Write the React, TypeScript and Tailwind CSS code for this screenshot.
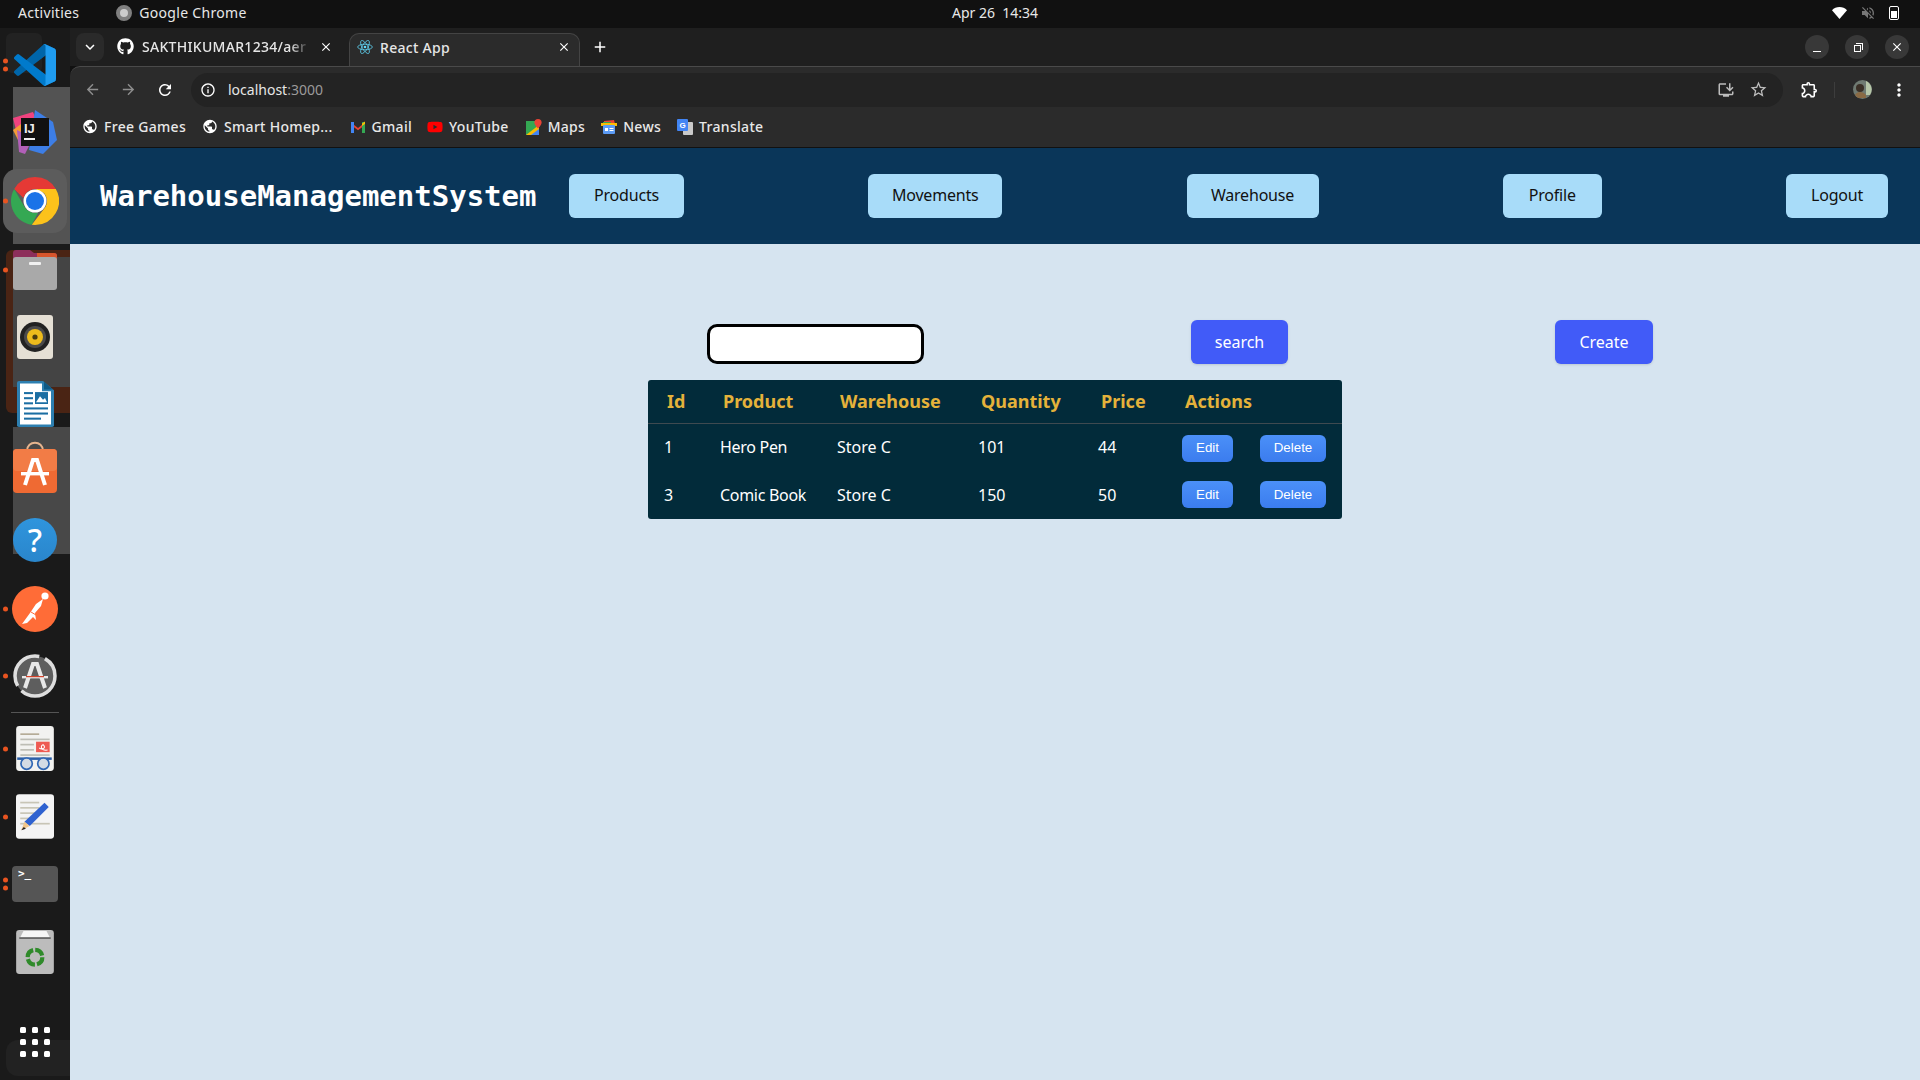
import {
  MdArrowBack,
  MdArrowForward,
  MdRefresh,
  MdInfoOutline,
  MdInstallDesktop,
  MdStarBorder,
  MdOutlineExtension,
  MdMoreVert,
  MdPublic,
  MdClose,
  MdAdd,
  MdKeyboardArrowDown,
  MdVolumeOff,
} from "react-icons/md";
import { FaGithub, FaYoutube } from "react-icons/fa";
import type { ReactNode } from "react";

const ChromeLogo = ({ size = 48 }: { size?: number }) => (
  <svg width={size} height={size} viewBox="0 0 48 48">
    <path fill="#e53935" d="M24 0a24 24 0 0 1 20.8 12H24a12 12 0 0 0-11.6 9L3.2 12A24 24 0 0 1 24 0Z" />
    <path fill="#34a853" d="M3.2 12l10.4 18a12 12 0 0 0 13.5 5.6L20.8 47.8A24 24 0 0 1 3.2 12Z" />
    <path fill="#fcc21b" d="M44.8 12A24 24 0 0 1 24 48l-3.2-.2L34.4 30A12 12 0 0 0 33 16l-9-4Z" />
    <circle cx="24" cy="24" r="11.5" fill="#fff" />
    <circle cx="24" cy="24" r="9" fill="#1a73e8" />
  </svg>
);

const VsCodeLogo = () => (
  <svg width="42" height="42" viewBox="0 0 100 100">
    <path fill="#0065a9" d="M96.5 10.8 75.9.9a6.2 6.2 0 0 0-7.1 1.2L1.4 63.6a4.2 4.2 0 0 0 0 6.2l5.5 5a4.2 4.2 0 0 0 5.3.2L93.3 13.5c2.7-2 6.7-.1 6.7 3.3v-.2a6.2 6.2 0 0 0-3.5-5.8Z" />
    <path fill="#007acc" d="m96.5 89.2-20.6 9.9a6.2 6.2 0 0 1-7.1-1.2L1.4 36.4a4.2 4.2 0 0 1 0-6.2l5.5-5a4.2 4.2 0 0 1 5.3-.2l81.1 61.5c2.7 2 6.7.1 6.7-3.3v.2a6.2 6.2 0 0 1-3.5 5.8Z" />
    <path fill="#1f9cf0" d="M75.9 99.1a6.2 6.2 0 0 1-7.1-1.2c2.3 2.3 6.2.7 6.2-2.6V4.7c0-3.3-3.9-4.9-6.2-2.6A6.2 6.2 0 0 1 75.9.9l20.6 9.9a6.2 6.2 0 0 1 3.5 5.6v67.2a6.2 6.2 0 0 1-3.5 5.6l-20.6 9.9Z" />
  </svg>
);

const IntellijLogo = () => (
  <svg width="44" height="44" viewBox="0 0 44 44">
    <path fill="#f0437f" d="M0 8 20 2l6 14-22 8Z" />
    <path fill="#f59b37" d="M0 20l8-6 6 16-8 2Z" />
    <path fill="#b25fb8" d="M4 20l16 8-8 16-6-2Z" />
    <path fill="#3d7ee6" d="M22 0l18 12 4 18-14 14-14-4Z" />
    <rect x="8" y="8" width="28" height="28" fill="#111" />
    <rect x="11" y="28" width="11" height="2" fill="#eee" />
    <text x="11" y="23" fill="#eee" fontSize="13" fontWeight="700" fontFamily="'Liberation Sans', sans-serif">IJ</text>
  </svg>
);

const FilesIcon = () => (
  <svg width="44" height="40" viewBox="0 0 44 40">
    <path fill="#8d2f5b" d="M0 3a3 3 0 0 1 3-3h14l4 3h20a3 3 0 0 1 3 3v8H0Z" />
    <path fill="#d8552b" d="M24 3h17a3 3 0 0 1 3 3v8H24Z" />
    <rect y="7" width="44" height="33" rx="3" fill="#a9a9a9" />
    <rect x="16" y="12" width="12" height="3" rx="1" fill="#f1f1f1" />
  </svg>
);

const RhythmboxIcon = () => (
  <svg width="36" height="44" viewBox="0 0 36 44">
    <rect width="36" height="44" rx="3" fill="#e5e0d5" />
    <circle cx="18" cy="22" r="15" fill="#222" />
    <circle cx="18" cy="22" r="11" fill="#4b4b4b" />
    <circle cx="18" cy="22" r="8" fill="#edbb1c" />
    <circle cx="18" cy="22" r="2.6" fill="#4a3b10" />
  </svg>
);

const WriterIcon = () => (
  <svg width="37" height="46" viewBox="0 0 37 54" preserveAspectRatio="none">
    <path fill="#2d7fb0" d="M2 0h24l11 11v41a2 2 0 0 1-2 2H2a2 2 0 0 1-2-2V2a2 2 0 0 1 2-2Z" />
    <path fill="#fff" d="M3 3h22v9h9v39H3Z" />
    <path fill="#0e5a86" d="M27 1l9 9h-9Z" />
    <rect x="7" y="13" width="9" height="2.4" fill="#1b6ea3" />
    <rect x="7" y="19" width="9" height="2.4" fill="#1b6ea3" />
    <rect x="7" y="25" width="9" height="2.4" fill="#1b6ea3" />
    <rect x="18" y="13" width="13" height="14" fill="#1b6ea3" />
    <path fill="#fff" d="M19 25l4-7 3 4 2-2 2 5Z" />
    <rect x="7" y="31" width="24" height="2.4" fill="#1b6ea3" />
    <rect x="7" y="37" width="24" height="2.4" fill="#1b6ea3" />
    <rect x="7" y="43" width="17" height="2.4" fill="#1b6ea3" />
  </svg>
);

const StoreIcon = () => (
  <svg width="44" height="52" viewBox="0 0 44 52">
    <path fill="none" stroke="#e6b48e" strokeWidth="2" d="M14 10c0-11 16-11 16 0" />
    <rect y="8" width="44" height="44" rx="4" fill="#ef6a33" />
    <rect y="8" width="44" height="22" rx="4" fill="#f27c46" />
    <path fill="none" stroke="#fff" strokeWidth="4" d="M12 44l8-25h4l8 25" />
    <rect x="8" y="31" width="28" height="3.4" fill="#fff" />
  </svg>
);

const HelpIcon = () => (
  <div className="w-11 h-11 rounded-full bg-linear-to-b from-[#2f95dd] to-[#2a86cc] flex items-center justify-center text-white text-[32px] font-medium leading-none">
    ?
  </div>
);

const PostmanIcon = () => (
  <svg width="46" height="46" viewBox="0 0 46 46">
    <circle cx="23" cy="23" r="23" fill="#ff6c37" />
    <circle cx="33" cy="10" r="3.6" fill="#fff" />
    <path fill="#fff" d="M31 13l-7 5-6 9-8 11 5-1 6-6 3 3-1-7 6-7Z" />
    <path fill="none" stroke="#ff6c37" strokeWidth="1" d="M19 26l5 3" />
  </svg>
);

const UpdaterIcon = () => (
  <svg width="44" height="44" viewBox="0 0 44 44">
    <circle cx="22" cy="22" r="20" fill="#5e5e5e" stroke="#dedede" strokeWidth="3.5" strokeDasharray="46 6" />
    <path fill="none" stroke="#e8e8e8" strokeWidth="4" d="M12 34l8-24h4l8 24" />
    <rect x="9" y="22" width="26" height="2.4" fill="#e8e8e8" />
    <rect x="13" y="22" width="18" height="1.2" fill="#d6432b" />
  </svg>
);

const ReaderIcon = () => (
  <svg width="38" height="45" viewBox="0 0 36 43">
    <rect width="36" height="43" rx="3" fill="#f2f2f0" />
    <rect x="4" y="7" width="18" height="1.6" fill="#b5ac97" />
    <rect x="4" y="12" width="28" height="1.6" fill="#bdbdb5" />
    <rect x="4" y="17" width="13" height="1.6" fill="#bdbdb5" />
    <rect x="4" y="22" width="13" height="1.6" fill="#bdbdb5" />
    <rect x="4" y="27" width="28" height="1.6" fill="#bdbdb5" />
    <rect x="19" y="15" width="13" height="10" fill="#ee5a52" />
    <path fill="none" stroke="#fff" strokeWidth="1" d="M22 21c3 2 7 0 4-3-3 0-3 6 4 5" />
    <rect x="1" y="30" width="33" height="2.4" fill="#2b5fa8" />
    <circle cx="10" cy="36" r="5.4" fill="#d4dbe4" stroke="#2f66b4" strokeWidth="1.6" />
    <circle cx="26" cy="36" r="5.4" fill="#d4dbe4" stroke="#2f66b4" strokeWidth="1.6" />
  </svg>
);

const EditorIcon = () => (
  <svg width="38" height="45" viewBox="0 0 36 42">
    <rect width="36" height="42" rx="3" fill="#f4f4f4" />
    <rect x="4" y="7" width="18" height="1.6" fill="#c8c5b6" />
    <rect x="4" y="12" width="18" height="1.6" fill="#c8c5b6" />
    <rect x="4" y="17" width="14" height="1.6" fill="#c8c5b6" />
    <rect x="4" y="22" width="10" height="1.6" fill="#c8c5b6" />
    <rect x="4" y="27" width="28" height="1.6" fill="#c8c5b6" />
    <path fill="#2f62d0" d="M27 8l4 4-18 18-5-4Z" />
    <path fill="#f0c58a" d="M8 26l5 4-8 4Z" />
    <path fill="#222" d="M5 34l2.4-3 2 1.6Z" />
  </svg>
);

const TerminalIcon = () => (
  <div className="w-[46px] h-9 rounded-[4px] bg-[#555] px-[6px] text-white text-[11px] leading-[16px] font-bold" style={{ fontFamily: "'DejaVu Sans Mono', monospace" }}>
    {">_"}
  </div>
);

const TrashIcon = () => (
  <svg width="38" height="44" viewBox="0 0 36 42">
    <rect width="36" height="42" rx="3" fill="#bcbcbc" />
    <path fill="#f5f5f5" d="M4 7l3-6h22l3 6Z" />
    <rect x="3" y="7" width="30" height="1.4" fill="#555" />
    <circle cx="18" cy="26" r="7" fill="none" stroke="#2f8a2a" strokeWidth="4" strokeDasharray="9 2" />
  </svg>
);

const GmailIcon = () => (
  <svg width="14" height="12" viewBox="0 0 14 12">
    <path fill="#ea4335" d="M0 1.5 7 7l7-5.5V4L7 9.2 0 4Z" />
    <rect y="1" width="3" height="11" fill="#4285f4" />
    <rect x="11" y="1" width="3" height="11" fill="#34a853" />
    <path fill="#fbbc04" d="M11 2.6 14 .6V3l-3 2Z" />
  </svg>
);

const MapsIcon = () => (
  <svg width="16" height="16" viewBox="0 0 16 16">
    <rect y="2" width="13" height="14" fill="#34a853" />
    <path fill="#fbbc04" d="M0 16 13 6v10Z" />
    <path fill="#4285f4" d="M5 16l8-6v6Z" />
    <path fill="#ea4335" d="M12 0a3.6 3.6 0 0 1 3.6 3.6c0 2.4-3.6 6-3.6 6s-3.6-3.6-3.6-6A3.6 3.6 0 0 1 12 0Z" />
  </svg>
);

const NewsIcon = () => (
  <svg width="16" height="14" viewBox="0 0 16 14">
    <path fill="#ea4335" d="M3 1l10-1 1 4H3Z" />
    <path fill="#34a853" d="M2 2h8v3H2Z" />
    <path fill="#fbbc04" d="M0 3h16v3H0Z" />
    <rect x="2" y="5" width="12" height="9" rx="1" fill="#5b9bf5" />
    <rect x="4" y="8" width="3" height="3" fill="#fff" />
    <rect x="8.5" y="8" width="4" height="1" fill="#fff" />
    <rect x="8.5" y="10" width="4" height="1" fill="#fff" />
  </svg>
);

const TranslateIcon = () => (
  <svg width="16" height="16" viewBox="0 0 16 16">
    <rect x="6" y="3" width="10" height="13" rx="1" fill="#c9c9c9" />
    <rect width="11" height="12" rx="1" fill="#4285f4" />
    <text x="2.6" y="9" fill="#fff" fontSize="8" fontWeight="700" fontFamily="'Liberation Sans', sans-serif">G</text>
  </svg>
);

const ReactFavicon = () => (
  <svg width="16" height="16" viewBox="-12 -12 24 24" fill="none" stroke="#61dafb" strokeWidth="1.1">
    <circle r="2" fill="#61dafb" stroke="none" />
    <ellipse rx="11" ry="4.2" />
    <ellipse rx="11" ry="4.2" transform="rotate(60)" />
    <ellipse rx="11" ry="4.2" transform="rotate(120)" />
  </svg>
);

const WifiFan = () => (
  <svg width="15" height="12" viewBox="0 0 15 12">
    <path fill="#fff" d="M7.5 12 0 3.2C2 1.2 4.6 0 7.5 0S13 1.2 15 3.2Z" />
  </svg>
);

const Avatar = () => (
  <svg width="19" height="19" viewBox="0 0 19 19">
    <circle cx="9.5" cy="9.5" r="9.5" fill="#6f7a72" />
    <path fill="#b6c6a8" d="M13 1a9.5 9.5 0 0 1 4 14h-4Z" />
    <circle cx="7" cy="8" r="4" fill="#3a2f26" />
    <path fill="#8a6a44" d="M2 15c2-4 8-4 11 0v3H5Z" />
  </svg>
);

const Slot = ({ className, dots = 0, children }: { className: string; dots?: number; children: ReactNode }) => (
  <div className={`relative w-full flex justify-center ${className}`}>
    {dots > 0 && (
      <div className="absolute left-[3px] top-1/2 -translate-y-1/2 flex flex-col gap-[3px]">
        {Array.from({ length: dots }).map((_, i) => (
          <span key={i} className="block w-[5px] h-[5px] rounded-full bg-[#e95420]" />
        ))}
      </div>
    )}
    {children}
  </div>
);

const Dock = () => (
  <aside className="relative w-[70px] shrink-0 bg-[#1a1a1a] overflow-hidden">
    {/* window previews showing through the dock */}
    <div className="absolute left-[6px] top-[5px] w-[36px] h-[40px] rounded-md bg-[#222]" />
    <div className="absolute left-[13px] top-[59px] w-[57px] h-[157px] bg-[#535353]" />
    <div className="absolute left-[6px] top-[222px] w-[64px] h-[163px] rounded-l-md bg-[#4a2414]" />
    <div className="absolute left-[13px] top-[229px] w-[57px] h-[130px] bg-[#444]" />
    <div className="absolute left-[13px] top-[399px] w-[57px] h-[127px] bg-[#484848]" />
    <div className="absolute left-[6px] bottom-[4px] w-[64px] h-[36px] rounded-l-xl bg-[#222]" />
    <div className="absolute left-[3px] top-[141px] w-[64px] h-[64px] rounded-[14px] bg-[#5c5c5c]" />

    <div className="relative flex flex-col items-center">
      <Slot className="mt-[16px] h-[42px]" dots={2}><VsCodeLogo /></Slot>
      <Slot className="mt-[24px] h-[44px]"><IntellijLogo /></Slot>
      <Slot className="mt-[23px] h-[48px]" dots={1}><ChromeLogo /></Slot>
      <Slot className="mt-[25px] h-[40px]" dots={1}><FilesIcon /></Slot>
      <Slot className="mt-[25px] h-[44px]"><RhythmboxIcon /></Slot>
      <Slot className="mt-[22px] h-[46px]"><WriterIcon /></Slot>
      <Slot className="mt-[14px] h-[52px]"><StoreIcon /></Slot>
      <Slot className="mt-[25px] h-[44px]"><HelpIcon /></Slot>
      <Slot className="mt-[24px] h-[46px]" dots={1}><PostmanIcon /></Slot>
      <Slot className="mt-[22px] h-[44px]" dots={1}><UpdaterIcon /></Slot>
      <div className="mt-[14px] w-[48px] h-px bg-[#555]" />
      <Slot className="mt-[13px] h-[45px]" dots={1}><ReaderIcon /></Slot>
      <Slot className="mt-[23px] h-[45px]" dots={1}><EditorIcon /></Slot>
      <Slot className="mt-[27px] h-9" dots={2}><TerminalIcon /></Slot>
      <Slot className="mt-[28px] h-[44px]"><TrashIcon /></Slot>
      <div className="mt-[53px] grid grid-cols-3 gap-[6px]">
        {Array.from({ length: 9 }).map((_, i) => (
          <span key={i} className="block w-[6px] h-[6px] rounded-[1.5px] bg-white" />
        ))}
      </div>
    </div>
  </aside>
);

const TopBar = () => (
  <header className="relative h-[28px] shrink-0 bg-[#111] flex items-center pb-[3px] text-[14px] tracking-[0.3px] text-[#e8e8e8]">
    <span className="ml-[18px]">Activities</span>
    <span className="ml-[37px] flex items-center gap-[7px]">
      <span className="w-4 h-4 rounded-full bg-[#ccc] border-[4px] border-[#808080] block" />
      Google Chrome
    </span>
    <span className="absolute left-[952px] whitespace-pre tracking-normal">Apr 26  14:34</span>
    <div className="ml-auto mr-[21px] flex items-center gap-[13px]">
      <WifiFan />
      <MdVolumeOff className="text-[#777] text-[16px]" />
      <span className="relative block w-[10px] h-[14px] rounded-[2px] border border-white">
        <span className="absolute left-[1px] right-[1px] bottom-[1px] h-[7px] bg-white" />
      </span>
    </div>
  </header>
);

const TabStrip = () => (
  <div className="h-[38px] shrink-0 bg-[#1f1f1f] flex items-end text-[14px] font-medium tracking-[0.3px] text-[#e6e6e6]">
    <button className="ml-[6px] mb-[5px] w-[28px] h-[28px] rounded-lg bg-[#2a2a2a] flex items-center justify-center text-white">
      <MdKeyboardArrowDown className="text-[18px]" />
    </button>
    <div className="w-[245px] h-[33px] pl-[13px] pb-[6px] flex items-center">
      <FaGithub className="text-white text-[17px] shrink-0" />
      <span className="ml-[8px] w-[168px] whitespace-nowrap overflow-hidden [mask-image:linear-gradient(to_right,black_88%,transparent)]">SAKTHIKUMAR1234/aer</span>
      <MdClose className="ml-[9px] text-white text-[14px] shrink-0" />
    </div>
    <div className="w-[231px] h-[33px] pl-[7px] pb-[6px] rounded-t-[10px] bg-[#2b2b2b] border border-b-0 border-[#444] flex items-center">
      <ReactFavicon />
      <span className="ml-[7px]">React App</span>
      <MdClose className="ml-auto mr-[8px] text-white text-[14px]" />
    </div>
    <MdAdd className="ml-[11px] mb-[10px] text-white text-[18px]" />
    <div className="ml-auto mb-[7px] mr-[11px] flex items-center gap-[16px] text-white">
      <span className="w-6 h-6 rounded-full bg-[#383838] flex items-end justify-center pb-[7px]"><span className="block w-[8px] h-px bg-white" /></span>
      <span className="w-6 h-6 rounded-full bg-[#383838] flex items-center justify-center">
        <span className="relative block w-[7px] h-[7px] border border-white translate-y-[1px]">
          <span className="absolute -top-[3px] left-[1px] w-[7px] h-[7px] border-t border-r border-white" />
        </span>
      </span>
      <span className="w-6 h-6 rounded-full bg-[#383838] flex items-center justify-center"><MdClose className="text-[14px]" /></span>
    </div>
  </div>
);

const Toolbar = () => (
  <div className="h-[44px] shrink-0 pt-[2px] bg-[#2b2b2b] border-t border-[#4a4a4a] rounded-tl-[10px] flex items-center text-[#8e8e8e]">
    <MdArrowBack className="ml-[14px] text-[17px]" />
    <MdArrowForward className="ml-[19px] text-[17px]" />
    <MdRefresh className="ml-[19px] text-[18px] text-white" />
    <div className="ml-[17px] w-[1592px] h-[34px] rounded-full bg-[#232323] flex items-center text-[14px]">
      <MdInfoOutline className="ml-[9px] text-[16px] text-white" />
      <span className="ml-[12px] text-[#e6e6e6]">localhost<span className="text-[#9a9a9a]">:3000</span></span>
      <MdInstallDesktop className="ml-auto text-[18px] text-[#bdbdbd]" />
      <MdStarBorder className="ml-[14px] mr-[15px] text-[19px] text-[#bdbdbd]" />
    </div>
    <MdOutlineExtension className="ml-[17px] text-[19px] text-white" />
    <span className="ml-[15px] block w-px h-[16px] bg-[#3d3d3d]" />
    <span className="ml-[18px] block"><Avatar /></span>
    <MdMoreVert className="ml-[17px] text-[20px] text-white" />
  </div>
);

const Bookmark = ({ icon, label, className }: { icon: ReactNode; label: string; className: string }) => (
  <div className={`flex items-center gap-[6px] ${className}`}>
    <span className="w-[16px] flex justify-center">{icon}</span>
    <span>{label}</span>
  </div>
);

const BookmarksBar = () => {
  const globe = <MdPublic className="text-white text-[17px]" />;
  return (
    <div className="h-[38px] shrink-0 pb-[4px] bg-[#2b2b2b] border-b border-[#111] flex items-center text-[14px] font-medium tracking-[0.3px] text-[#e8e8e8]">
      <Bookmark className="ml-[12px]" icon={globe} label="Free Games" />
      <Bookmark className="ml-[16px]" icon={globe} label="Smart Homep..." />
      <Bookmark className="ml-[17px]" icon={<GmailIcon />} label="Gmail" />
      <Bookmark className="ml-[15px]" icon={<FaYoutube className="text-[#f00] text-[16px]" />} label="YouTube" />
      <Bookmark className="ml-[17px]" icon={<MapsIcon />} label="Maps" />
      <Bookmark className="ml-[16px]" icon={<NewsIcon />} label="News" />
      <Bookmark className="ml-[16px]" icon={<TranslateIcon />} label="Translate" />
    </div>
  );
};

const NavButton = ({ label, className }: { label: string; className: string }) => (
  <button className={`h-11 pb-[2px] rounded-md bg-[#a8dcf9] text-[#111] text-[16px] tracking-[-0.2px] ${className}`}>{label}</button>
);

const rows = [
  { id: 1, product: "Hero Pen", warehouse: "Store C", quantity: 101, price: 44, pad: "pt-[11px]" },
  { id: 3, product: "Comic Book", warehouse: "Store C", quantity: 150, price: 50, pad: "pt-[10px]" },
];

const headings = ["Id", "Product", "Warehouse", "Quantity", "Price", "Actions"];

const ProductsPage = () => (
  <main className="flex-1 bg-[#d6e4f0]">
    <nav className="h-24 bg-[#0a3659] flex items-center pl-[30px] pr-[32px]">
      <h1
        className="w-[469px] shrink-0 pt-[2px] text-white text-[29px] font-bold whitespace-nowrap"
        style={{ fontFamily: "'DejaVu Sans Mono', monospace" }}
      >
        WarehouseManagementSystem
      </h1>
      <div className="flex-1 flex items-center justify-between">
        <NavButton label="Products" className="w-[115px]" />
        <NavButton label="Movements" className="w-[134px]" />
        <NavButton label="Warehouse" className="w-[132px]" />
        <NavButton label="Profile" className="w-[99px]" />
        <NavButton label="Logout" className="w-[102px]" />
      </div>
    </nav>

    <div className="pt-[76px]">
      <div className="flex items-end pl-[637px]">
        <input className="w-[217px] h-10 bg-white border-[3px] border-black rounded-[10px]" />
        <button className="ml-[267px] w-[97px] h-11 rounded-md bg-[#415bf8] text-white text-[16px] shadow-sm">search</button>
        <button className="ml-[267px] w-[98px] h-11 rounded-md bg-[#415bf8] text-white text-[16px] shadow-sm">Create</button>
      </div>

      <div className="mt-4 ml-[578px] w-[694px] rounded-[3px] bg-[#022b3a] overflow-hidden">
        <table className="w-full table-fixed text-left">
          <colgroup>
            <col className="w-[56px]" />
            <col className="w-[117px]" />
            <col className="w-[141px]" />
            <col className="w-[120px]" />
            <col className="w-[84px]" />
            <col className="w-[176px]" />
          </colgroup>
          <thead>
            <tr className="h-[43px] border-b border-[#3f4a50]">
              {headings.map((h) => (
                <th key={h} className="pl-[19px] text-[18px] font-bold text-[#e4b23a]">{h}</th>
              ))}
            </tr>
          </thead>
          <tbody className="text-[16px] text-white">
            {rows.map((r) => (
              <tr key={r.id} className="h-12">
                <td className="pl-4">{r.id}</td>
                <td className="pl-4 tracking-[-0.3px]">{r.product}</td>
                <td className="pl-4">{r.warehouse}</td>
                <td className="pl-4">{r.quantity}</td>
                <td className="pl-4">{r.price}</td>
                <td className={`pl-4 pr-4 align-top ${r.pad}`}>
                  <div className="flex justify-between" style={{ fontFamily: "'Liberation Sans', sans-serif" }}>
                    <button className="w-[51px] h-[27px] rounded-md bg-linear-to-b from-[#4b90f8] to-[#3b7cee] text-[13.33px] text-white">Edit</button>
                    <button className="w-[66px] h-[27px] rounded-md bg-linear-to-b from-[#4b90f8] to-[#3b7cee] text-[13.33px] text-white">Delete</button>
                  </div>
                </td>
              </tr>
            ))}
          </tbody>
        </table>
      </div>
    </div>
  </main>
);

export default function App() {
  return (
    <div className="h-screen w-full overflow-hidden flex flex-col bg-[#111]" style={{ fontFamily: "'Noto Sans', sans-serif" }}>
      <TopBar />
      <div className="flex-1 flex min-h-0">
        <Dock />
        <div className="flex-1 min-w-0 flex flex-col">
          <TabStrip />
          <Toolbar />
          <BookmarksBar />
          <ProductsPage />
        </div>
      </div>
    </div>
  );
}
